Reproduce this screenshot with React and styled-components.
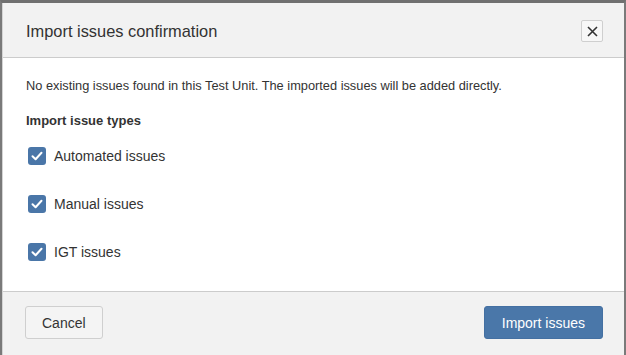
import React from 'react'
import styled, { createGlobalStyle } from 'styled-components'

const GlobalStyle = createGlobalStyle`
  html, body {
    margin: 0;
    padding: 0;
    background: #ffffff;
  }
  body {
    font-family: "Liberation Sans", Arial, sans-serif;
    color: #333333;
  }
`

const Dialog = styled.div`
  box-sizing: border-box;
  width: 626px;
  height: 355px;
  display: flex;
  flex-direction: column;
  border-top: 3px solid #707070;
  border-left: 2px solid #7a7a7a;
  border-right: 2px solid #7a7a7a;
  background: #ffffff;
`

const Inner = styled.div`
  flex: 1;
  display: flex;
  flex-direction: column;
  border-left: 1px solid #d4d4d4;
`

const Header = styled.div`
  height: 55px;
  box-sizing: border-box;
  display: flex;
  align-items: center;
  justify-content: space-between;
  padding: 2px 21px 0 23px;
  background: #f2f2f2;
  border-bottom: 1px solid #cccccc;
`

const Title = styled.h4`
  margin: 0;
  font-size: 16.4px;
  font-weight: normal;
  color: #333333;
`

const CloseButton = styled.button`
  width: 22px;
  height: 22px;
  padding: 0;
  display: flex;
  align-items: center;
  justify-content: center;
  background: #f7f7f7;
  border: 1px solid #cfcfcf;
  border-radius: 2px;
  cursor: pointer;
`

const Body = styled.div`
  flex: 1;
  padding: 19px 23px 0;
  display: flex;
  flex-direction: column;
`

const Info = styled.p`
  margin: 0;
  font-size: 12.8px;
  line-height: 18px;
`

const SectionTitle = styled.div`
  margin-top: 17px;
  font-size: 13px;
  font-weight: bold;
  line-height: 18px;
`

const OptionList = styled.div`
  display: flex;
  flex-direction: column;
  gap: 30px;
  margin-top: 17px;
  padding-left: 2px;
`

const Option = styled.label`
  display: flex;
  align-items: center;
  gap: 8px;
  font-size: 14px;
  color: #333333;
  height: 18px;
`

const Box = styled.span`
  width: 18px;
  height: 18px;
  border-radius: 3px;
  background: ${p => (p.$checked ? '#4a76a8' : '#ffffff')};
  border: ${p => (p.$checked ? 'none' : '1px solid #aaa')};
  display: flex;
  align-items: center;
  justify-content: center;
`

const Footer = styled.div`
  height: 64px;
  box-sizing: border-box;
  display: flex;
  align-items: flex-start;
  justify-content: space-between;
  padding: 14px 21px 0 22px;
  background: #f2f2f2;
  border-top: 1px solid #cccccc;
`

const Button = styled.button`
  height: 33px;
  box-sizing: border-box;
  padding: 0 ${p => (p.$primary ? '17px' : '16px')};
  font-family: "Liberation Sans", Arial, sans-serif;
  font-size: 14px;
  border-radius: 3px;
  cursor: pointer;
  color: ${p => (p.$primary ? '#ffffff' : '#333333')};
  background: ${p => (p.$primary ? '#4a77a9' : '#f4f4f4')};
  border: 1px solid ${p => (p.$primary ? '#4470a2' : '#cfcfcf')};
`

function Check({ label }) {
  return (
    <Option>
      <Box $checked>
        <svg width="12" height="10" viewBox="0 0 12 10">
          <path d="M1.5 5.2 L4.6 8.2 L10.5 1.8" fill="none" stroke="#fff" strokeWidth="2" strokeLinecap="round" strokeLinejoin="round" />
        </svg>
      </Box>
      {label}
    </Option>
  )
}

export default function App() {
  return (
    <>
      <GlobalStyle />
      <Dialog>
        <Inner>
          <Header>
            <Title>Import issues confirmation</Title>
            <CloseButton aria-label="Close">
              <svg width="11" height="11" viewBox="0 0 11 11">
                <path d="M1 1 L10 10 M10 1 L1 10" stroke="#333" strokeWidth="1.6" />
              </svg>
            </CloseButton>
          </Header>
          <Body>
            <Info>No existing issues found in this Test Unit. The imported issues will be added directly.</Info>
            <SectionTitle>Import issue types</SectionTitle>
            <OptionList>
              <Check label="Automated issues" />
              <Check label="Manual issues" />
              <Check label="IGT issues" />
            </OptionList>
          </Body>
          <Footer>
            <Button>Cancel</Button>
            <Button $primary>Import issues</Button>
          </Footer>
        </Inner>
      </Dialog>
    </>
  )
}
